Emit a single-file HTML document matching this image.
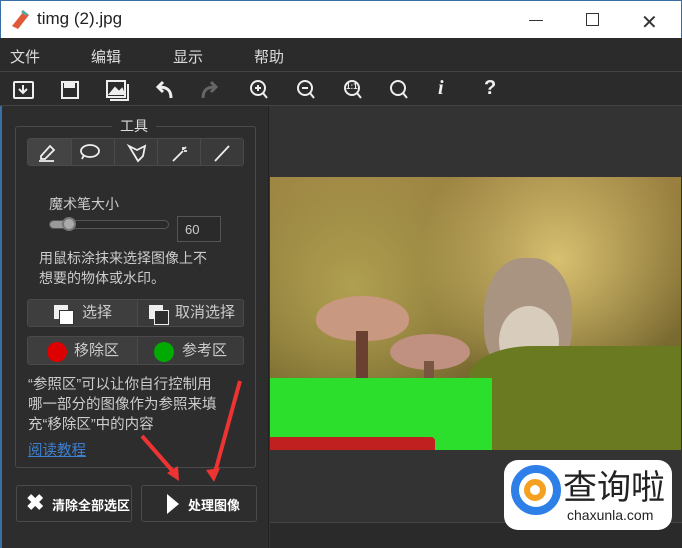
<!DOCTYPE html>
<html><head><meta charset="utf-8"><style>
*{margin:0;padding:0;box-sizing:border-box}
body{width:682px;height:548px;overflow:hidden;background:#2b2b2b;font-family:"Liberation Sans","Noto Sans CJK SC",sans-serif;position:relative;color:#ddd}
.abs{position:absolute}
.title{left:0;top:0;width:682px;height:38px;background:#fff;border-top:1px solid #3a6ea5;border-left:1px solid #3a6ea5;border-right:1px solid #3a6ea5}
.menu{left:0;top:38px;width:682px;height:34px;background:#2b2b2b;border-bottom:1px solid #444}
.menu span{position:absolute;top:8px;font-size:15px;color:#ddd}
.tb{left:0;top:73px;width:682px;height:33px;background:#2b2b2b;border-bottom:1px solid #444}
.left{left:0;top:106px;width:268px;height:442px;background:#2d2d2d;border-left:2px solid #3a6ea5}
.right{left:268px;top:106px;width:414px;height:442px;background:#333;border-left:1px solid #222}
.box{border:1px solid #4a4a4a;border-radius:3px}
.btn{background:#3a3a3a;border:1px solid #4a4a4a;border-radius:3px}
.t{font-size:14px;color:#ccc;line-height:20px}
</style></head><body>
<div class="abs title">
 <svg class="abs" style="left:9px;top:8px" width="20" height="22"><path d="M14 2 L19 6 L8 20 L2 17 Z" fill="#e05a3a"/><path d="M13 1 L18 5 L16 7 L11 3Z" fill="#5aa"/></svg>
 <div class="abs" style="left:36px;top:8px;font-size:17px;color:#222">timg (2).jpg</div>
 <div class="abs" style="left:528px;top:19px;width:14px;height:1px;background:#333"></div>
 <div class="abs" style="left:585px;top:12px;width:13px;height:13px;border:1px solid #333"></div>
 <div class="abs" style="left:640px;top:9px;font-size:20px;color:#333">✕</div>
</div>
<div class="abs menu"><span style="left:10px">文件</span><span style="left:91px">编辑</span><span style="left:173px">显示</span><span style="left:254px">帮助</span></div>
<div class="abs tb">
<svg width="682" height="33" style="position:absolute;left:0;top:0" fill="none" stroke="#eee" stroke-width="2">
<rect x="14" y="9" width="19" height="16" rx="1"/><path d="M23 12v8M19 16l4 4 4-4"/>
<rect x="62" y="9" width="16" height="16"/><rect x="65" y="9" width="9" height="5" fill="#eee"/>
<rect x="107" y="8" width="18" height="16"/><path d="M110 21l5-6 4 4 3-3 2 5z" fill="#eee"/><path d="M110 27h18V11"/>
<path d="M171 25c0-8-4-11-12-11M163 9l-5 5 5 5" stroke-width="3"/>
<path d="M203 25c0-8 4-11 12-11M211 9l5 5-5 5" stroke="#666" stroke-width="3"/>
<circle cx="258" cy="15" r="7"/><path d="M263 20l4 5M255 15h6M258 12v6"/>
<circle cx="305" cy="15" r="7"/><path d="M310 20l4 5M302 15h6"/>
<circle cx="352" cy="15" r="7"/><path d="M357 20l4 5"/>
<circle cx="398" cy="15" r="7"/><path d="M403 20l4 5"/>
</svg>
<div class="abs" style="left:346px;top:9px;font-size:8px;color:#eee;font-weight:bold">1:1</div>
<div class="abs" style="left:438px;top:4px;font-size:20px;color:#eee;font-weight:bold;font-style:italic;font-family:'Liberation Serif'">i</div>
<div class="abs" style="left:484px;top:4px;font-size:20px;color:#eee;font-weight:bold">?</div>
</div>
<div class="abs left">
 <div class="abs box" style="left:13px;top:20px;width:241px;height:342px"></div>
 <div class="abs" style="left:110px;top:10px;padding:0 8px;background:#2d2d2d;font-size:14px;color:#ddd">工具</div>
 <div class="abs btn" style="left:25px;top:32px;width:217px;height:28px;display:flex">
  <div style="width:44px;background:#444;border-right:1px solid #4a4a4a"></div>
  <div style="width:43px;border-right:1px solid #4a4a4a"></div><div style="width:43px;border-right:1px solid #4a4a4a"></div><div style="width:43px;border-right:1px solid #4a4a4a"></div><div style="flex:1"></div>
 </div>
 <svg class="abs" style="left:25px;top:32px" width="217" height="28" fill="none" stroke="#eee" stroke-width="1.8">
  <path d="M14 18l9-10 4 4-9 9h-4zM12 23h15"/>
  <ellipse cx="63" cy="13" rx="9" ry="6"/><path d="M57 17l-2 4"/>
  <path d="M102 8l8 4 8-4-2 10-5 5z"/>
  <path d="M146 23l10-10M156 9v3M160 13h-3M159 9l-2 2"/>
  <path d="M188 23l14-15"/>
 </svg>
 <div class="abs t" style="left:47px;top:88px">魔术笔大小</div>
 <div class="abs" style="left:47px;top:114px;width:120px;height:9px;border:1px solid #555;border-radius:5px;background:#2a2a2a"></div>
 <div class="abs" style="left:48px;top:115px;width:18px;height:7px;background:#999;border-radius:4px"></div>
 <div class="abs" style="left:60px;top:111px;width:14px;height:14px;border-radius:50%;background:#aaa;border:2px solid #777"></div>
 <div class="abs" style="left:175px;top:110px;width:44px;height:26px;border:1px solid #555;background:#2a2a2a;font-size:13px;color:#ccc;padding:5px 0 0 7px">60</div>
 <div class="abs t" style="left:37px;top:142px">用鼠标涂抹来选择图像上不<br>想要的物体或水印。</div>
 <div class="abs btn" style="left:25px;top:193px;width:217px;height:28px;display:flex"><div style="width:110px;background:#3e3e3e;border-right:1px solid #4a4a4a"></div></div>
 <div class="abs" style="left:52px;top:199px;width:14px;height:14px;background:#eee"></div><div class="abs" style="left:57px;top:204px;width:15px;height:15px;background:#fff;border:1px solid #333"></div>
 <div class="abs t" style="left:80px;top:197px;font-size:15px">选择</div>
 <div class="abs" style="left:147px;top:199px;width:14px;height:14px;background:#eee"></div><div class="abs" style="left:152px;top:204px;width:15px;height:15px;background:#2d2d2d;border:1px solid #eee"></div>
 <div class="abs t" style="left:173px;top:197px;font-size:15px">取消选择</div>
 <div class="abs btn" style="left:25px;top:230px;width:217px;height:29px;display:flex"><div style="width:110px;background:#3e3e3e;border-right:1px solid #4a4a4a"></div></div>
 <div class="abs" style="left:45px;top:236px;width:20px;height:20px;border-radius:50%;background:#d00"></div>
 <div class="abs t" style="left:72px;top:235px;font-size:15px">移除区</div>
 <div class="abs" style="left:152px;top:236px;width:20px;height:20px;border-radius:50%;background:#0a0"></div>
 <div class="abs t" style="left:180px;top:235px;font-size:15px">参考区</div>
 <div class="abs t" style="left:26px;top:269px;font-size:14.5px">“参照区”可以让你自行控制用<br>哪一部分的图像作为参照来填<br>充“移除区”中的内容</div>
 <div class="abs" style="left:26px;top:333px;font-size:14.5px;color:#3d7fd0;text-decoration:underline">阅读教程</div>
 <div class="abs box" style="left:14px;top:379px;width:116px;height:37px"></div>
 <div class="abs" style="left:24px;top:384px;font-size:22px;color:#fff;font-weight:bold">✖</div>
 <div class="abs" style="left:50px;top:389px;font-size:13px;color:#fff;font-weight:bold">清除全部选区</div>
 <div class="abs box" style="left:139px;top:379px;width:116px;height:37px"></div>
 <svg class="abs" style="left:164px;top:387px" width="14" height="22"><path d="M1 1L13 11 1 21z" fill="#fff"/></svg>
 <div class="abs" style="left:186px;top:389px;font-size:13px;color:#fff;font-weight:bold">处理图像</div>
 <svg class="abs" style="left:130px;top:270px" width="120" height="110"><path d="M10 60 L45 100" stroke="#e33" stroke-width="4"/><path d="M35 97l12 8 -1-15z" fill="#e33"/><path d="M108 5 L82 100" stroke="#e33" stroke-width="4"/><path d="M74 94l8 12 6-14z" fill="#e33"/></svg>
</div>
<div class="abs right">
 <div class="abs" style="left:1px;top:71px;width:411px;height:273px;background:radial-gradient(circle at 70% 30%,#d8c070,transparent 40%),radial-gradient(circle at 20% 40%,#b0a050,transparent 45%),linear-gradient(180deg,#9a8040,#7a6a30 60%,#5a5020)"></div>
 <div class="abs" style="left:47px;top:190px;width:93px;height:45px;border-radius:50% 50% 45% 45%;background:#c89880"></div>
 <div class="abs" style="left:87px;top:225px;width:12px;height:50px;background:#6a4030"></div>
 <div class="abs" style="left:121px;top:228px;width:80px;height:36px;border-radius:50%;background:#c09080"></div>
 <div class="abs" style="left:155px;top:255px;width:10px;height:25px;background:#7a5540"></div>
 <div class="abs" style="left:215px;top:152px;width:88px;height:118px;border-radius:45% 45% 40% 40%;background:#a89480"></div>
 <div class="abs" style="left:230px;top:200px;width:60px;height:70px;border-radius:50%;background:#d8ccbc"></div>
 <div class="abs" style="left:200px;top:240px;width:212px;height:104px;background:#6a7a20;border-radius:30% 0 0 0"></div>
 <div class="abs" style="left:1px;top:272px;width:222px;height:72px;background:#2ddf2d"></div>
 <div class="abs" style="left:1px;top:331px;width:165px;height:13px;background:#c02020;border-radius:0 4px 0 0"></div>
 <div class="abs" style="left:1px;top:416px;width:413px;height:26px;background:#2a2a2a;border-top:1px solid #444"></div>
 <div class="abs" style="left:235px;top:354px;width:168px;height:70px;background:#fff;border-radius:14px"></div>
 <div class="abs" style="left:242px;top:359px;width:50px;height:50px;border-radius:50%;border:8px solid #2f7fe8"></div>
 <div class="abs" style="left:255px;top:373px;width:22px;height:22px;border-radius:50%;border:6px solid #f5a020"></div>
 <div class="abs" style="left:294px;top:356px;font-size:34px;color:#222;font-family:'Noto Sans CJK SC',sans-serif;line-height:46px">查询啦</div>
 <div class="abs" style="left:298px;top:401px;font-size:14px;color:#222">chaxunla.com</div>
</div>
</body></html>
